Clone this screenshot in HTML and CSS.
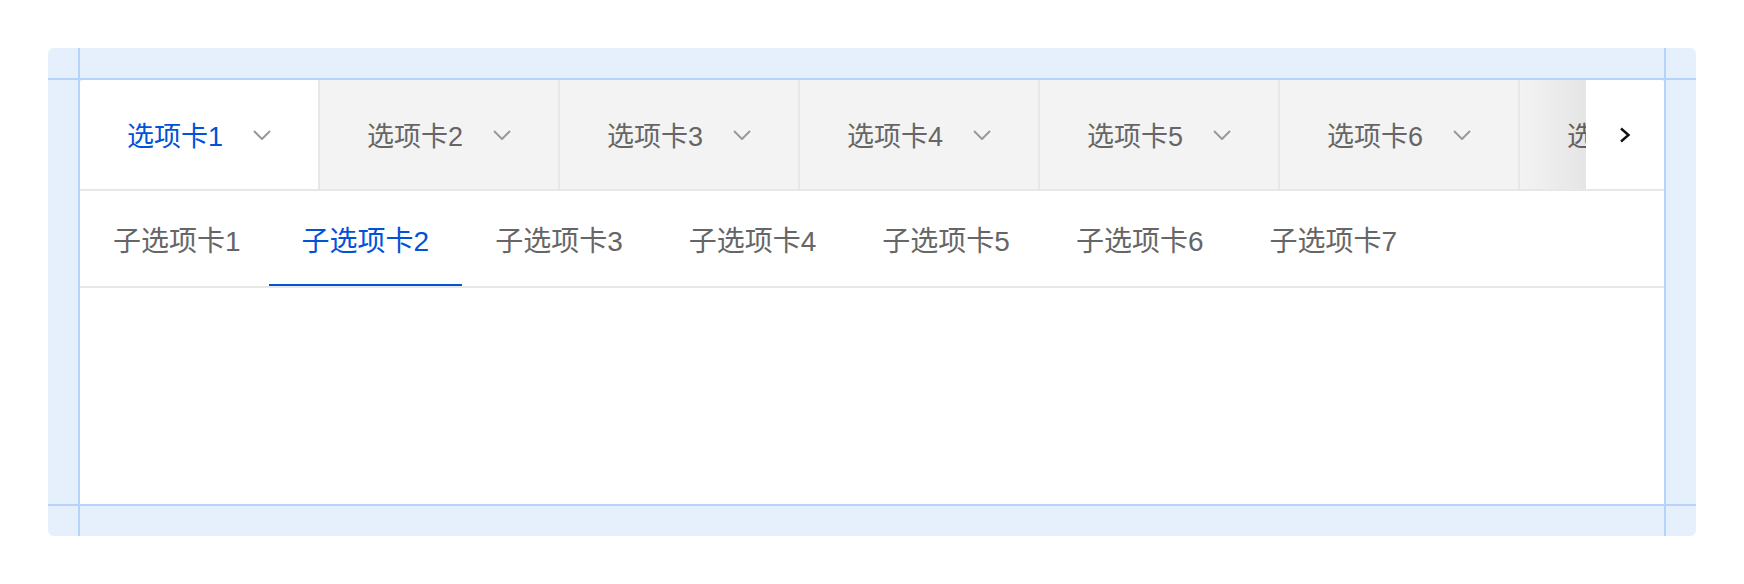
FILE: index.html
```html
<!DOCTYPE html>
<html lang="zh-CN">
<head>
    <meta charset="UTF-8">
    <title>选项卡</title>
    <link rel="stylesheet" href="styles.css">
</head>
<body>
<div class="frame">
    <section class="card">
        <nav class="tabs">
            <div class="tabs-list">
                <div class="tab is-active"><span>选项卡1</span><svg class="caret" viewBox="0 0 18 10"><path d="M1 1l8 8 8-8"/></svg></div>
                <div class="tab"><span>选项卡2</span><svg class="caret" viewBox="0 0 18 10"><path d="M1 1l8 8 8-8"/></svg></div>
                <div class="tab"><span>选项卡3</span><svg class="caret" viewBox="0 0 18 10"><path d="M1 1l8 8 8-8"/></svg></div>
                <div class="tab"><span>选项卡4</span><svg class="caret" viewBox="0 0 18 10"><path d="M1 1l8 8 8-8"/></svg></div>
                <div class="tab"><span>选项卡5</span><svg class="caret" viewBox="0 0 18 10"><path d="M1 1l8 8 8-8"/></svg></div>
                <div class="tab"><span>选项卡6</span><svg class="caret" viewBox="0 0 18 10"><path d="M1 1l8 8 8-8"/></svg></div>
                <div class="tab"><span>选项卡7</span><svg class="caret" viewBox="0 0 18 10"><path d="M1 1l8 8 8-8"/></svg></div>
                <div class="tabs-fade"></div>
            </div>
            <button class="tabs-next" type="button" aria-label="下一页">
                <svg viewBox="0 0 12 16"><path d="M2 1.5l7.5 6.5-7.5 6.5"/></svg>
            </button>
        </nav>
        <nav class="subtabs">
            <div class="subtab">子选项卡1</div>
            <div class="subtab is-active">子选项卡2</div>
            <div class="subtab">子选项卡3</div>
            <div class="subtab">子选项卡4</div>
            <div class="subtab">子选项卡5</div>
            <div class="subtab">子选项卡6</div>
            <div class="subtab">子选项卡7</div>
        </nav>
        <div class="panel"></div>
    </section>
</div>
</body>
</html>
```

FILE: styles.css
```css
body {
    margin: 0;
    background: #fff;
    font-family: "Liberation Sans", "Noto Sans CJK SC", sans-serif;
}

/* padding guide: light blue frame with 2px lines at the inner edge */
.frame {
    margin: 48px;
    width: 1648px;
    height: 488px;
    box-sizing: border-box;
    padding: 32px;
    border-radius: 6px;
    background:
        linear-gradient(#b6d4fb, #b6d4fb) 0 30px / 100% 2px no-repeat,
        linear-gradient(#b6d4fb, #b6d4fb) 0 calc(100% - 30px) / 100% 2px no-repeat,
        linear-gradient(#b6d4fb, #b6d4fb) 30px 0 / 2px 100% no-repeat,
        linear-gradient(#b6d4fb, #b6d4fb) calc(100% - 30px) 0 / 2px 100% no-repeat,
        #e6f0fd;
}

.card {
    height: 100%;
    background: #fff;
    border-radius: 4px 4px 0 0;
    display: flex;
    flex-direction: column;
}

.tabs {
    display: flex;
    height: 109px;
    border-bottom: 2px solid #e7e7e7;
}

.tabs-list {
    flex: 1;
    display: flex;
    overflow: hidden;
    position: relative;
    background: #f3f3f3;
    border-top-left-radius: 4px;
}

.tab {
    flex-shrink: 0;
    width: 238px;
    border-right: 2px solid #e7e7e7;
    display: flex;
    align-items: center;
    justify-content: center;
    gap: 30px;
    font-size: 27px;
    color: #666;
    background: #f3f3f3;
}

.tab.is-active {
    background: #fff;
    color: #0052d9;
    border-top-left-radius: 4px;
}

.caret {
    width: 18px;
    height: 10px;
    fill: none;
    stroke: #999;
    stroke-width: 2;
}

.tabs-fade {
    position: absolute;
    top: 0;
    right: 0;
    bottom: 0;
    width: 66px;
    background: linear-gradient(to right, rgba(0, 0, 0, 0), rgba(0, 0, 0, 0.06));
}

.tabs-next {
    width: 78px;
    border: 0;
    padding: 0;
    background: #fff;
    border-top-right-radius: 4px;
    display: flex;
    align-items: center;
    justify-content: center;
}

.tabs-next svg {
    width: 12px;
    height: 16px;
    fill: none;
    stroke: #111;
    stroke-width: 2.4;
}

.subtabs {
    display: flex;
    height: 95px;
    border-bottom: 2px solid #e7e7e7;
}

.subtab {
    position: relative;
    display: flex;
    align-items: center;
    padding: 0 33px;
    font-size: 28px;
    color: #666;
}

/* the "1" is narrower in the original face */
.subtab:first-child {
    padding-right: 28px;
}

.subtab.is-active {
    color: #0052d9;
}

.subtab.is-active::after {
    content: "";
    position: absolute;
    left: 0;
    right: 0;
    bottom: 0;
    height: 2px;
    background: #0052d9;
}

.panel {
    flex: 1;
}
```
